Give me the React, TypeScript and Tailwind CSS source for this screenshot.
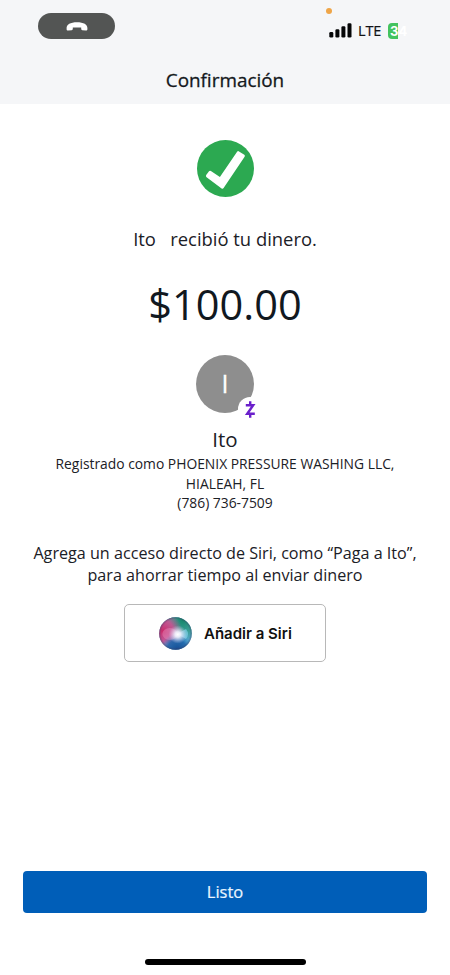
import type { ReactNode } from 'react'

const payment = {
  recipient: 'Ito',
  amount: '$100.00',
  registeredAs: ['Registrado como PHOENIX PRESSURE WASHING LLC,', 'HIALEAH, FL', '(786) 736-7509'],
}

function SignalBars() {
  return (
    <svg className="mb-px h-[15px] w-[23px]" viewBox="0 0 23 15" fill="#050607">
      <rect x="0.3" y="9" width="4" height="5.5" rx="1.3" />
      <rect x="6.4" y="6.3" width="4" height="8.2" rx="1.3" />
      <rect x="12.4" y="3.3" width="4" height="11.2" rx="1.3" />
      <rect x="18.5" y="0.3" width="4" height="14.2" rx="1.3" />
    </svg>
  )
}

function StatusBar() {
  return (
    <div className="relative flex h-[52px] justify-between pl-[38px] pr-[38px]">
      <div className="mt-[13px] flex h-[26px] w-[77px] items-center justify-center rounded-full bg-[#535554]">
        <svg className="h-[9px] w-[22px]" viewBox="0 0 22 9" fill="white">
          <path d="M.6 6.2C.4 2.4 4.4.2 11 .2S21.6 2.4 21.4 6.2V7.2C21.3 8.2 20.8 8.5 20 8.5L16.4 8.2C15.6 8.1 15.2 7.6 15.2 6.8V5.4H6.8V6.8C6.8 7.6 6.4 8.1 5.6 8.2L2 8.5C1.2 8.5.7 8.2.6 7.2Z" />
        </svg>
      </div>
      <span className="absolute left-[326px] top-[8px] h-[6px] w-[6px] rounded-full bg-[#efa548]" />
      <div className="mt-[22px] flex h-[18px] w-[83px] items-center">
        <SignalBars />
        <span className="ml-[6px] w-[24px] whitespace-nowrap font-['Open_Sans',sans-serif] text-[14.5px] leading-[18px] tracking-[-0.1px] text-[#111315] [-webkit-text-stroke:0.2px_#111315]">
          LTE
        </span>
        <div className="mb-px ml-[6px] flex h-[16px] w-[24px] items-center rounded-l-[4px] bg-[linear-gradient(90deg,#43c35e_10.5px,transparent_10.5px)] pl-[2px] font-['Inter',sans-serif] text-[13px] font-bold leading-[16px] text-white">
          34
        </div>
      </div>
    </div>
  )
}

function SuccessBadge() {
  return (
    <svg className="mt-[36px] h-[57px] w-[57px]" viewBox="0 0 57 57">
      <circle cx="28.5" cy="28.5" r="28.5" fill="#2ca951" />
      <path
        d="M9.2 35 12 31.3Q12.8 30.3 13.9 31L22.9 37 40.1 11.8Q40.9 10.6 42 11.4L47.3 14.7Q48.4 15.5 47.6 16.7L26.6 48Q25.8 49.3 24.6 48.5L9.6 37.3Q8.4 36.2 9.2 35Z"
        fill="white"
      />
    </svg>
  )
}

function Avatar() {
  return (
    <svg className="mt-[25px] ml-[4px] h-[65px] w-[62px]" viewBox="0 0 62 65">
      <circle cx="29" cy="29" r="29" fill="#8e8e8e" />
      <text
        x="29"
        y="38"
        textAnchor="middle"
        className="font-['Open_Sans',sans-serif] text-[25px]"
        fill="white"
        stroke="white"
        strokeWidth="0.3"
      >
        I
      </text>
      <circle cx="54" cy="54" r="12" fill="white" />
      <path d="M49.8 50.2H57.2L51.2 58.8H58.8" fill="none" stroke="#6a1fcb" strokeWidth="2.4" />
      <path d="M54.2 46.2V50M54.2 59V62.8" fill="none" stroke="#6a1fcb" strokeWidth="2.4" />
    </svg>
  )
}

function SiriOrb() {
  return (
    <svg className="h-[33px] w-[33px]" viewBox="0 0 33 33">
      <defs>
        <radialGradient id="orb-pink" cx="0.1" cy="0.42" r="0.6">
          <stop offset="0" stopColor="#c92a6a" />
          <stop offset="0.55" stopColor="#d54c90" stopOpacity="0.85" />
          <stop offset="1" stopColor="#d54c90" stopOpacity="0" />
        </radialGradient>
        <radialGradient id="orb-green" cx="0.72" cy="0.08" r="0.65">
          <stop offset="0" stopColor="#15866a" />
          <stop offset="0.6" stopColor="#339d8c" stopOpacity="0.85" />
          <stop offset="1" stopColor="#339d8c" stopOpacity="0" />
        </radialGradient>
        <radialGradient id="orb-blue" cx="0.55" cy="1" r="0.5">
          <stop offset="0" stopColor="#164a91" />
          <stop offset="0.6" stopColor="#1d63aa" stopOpacity="0.85" />
          <stop offset="1" stopColor="#3a8fce" stopOpacity="0" />
        </radialGradient>
        <radialGradient id="orb-glow" cx="0.57" cy="0.53" r="0.28">
          <stop offset="0" stopColor="#fff" />
          <stop offset="0.3" stopColor="#f4f4ff" stopOpacity="0.9" />
          <stop offset="1" stopColor="#d9cdf2" stopOpacity="0" />
        </radialGradient>
        <radialGradient id="orb-edge">
          <stop offset="0.86" stopColor="#40395e" stopOpacity="0" />
          <stop offset="1" stopColor="#40395e" stopOpacity="0.45" />
        </radialGradient>
      </defs>
      <circle cx="16.5" cy="16.5" r="16.3" fill="#56a8ce" />
      <circle cx="16.5" cy="16.5" r="16.3" fill="url(#orb-green)" />
      <circle cx="16.5" cy="16.5" r="16.3" fill="url(#orb-pink)" />
      <circle cx="16.5" cy="16.5" r="16.3" fill="url(#orb-blue)" />
      <ellipse cx="10.8" cy="17" rx="7.5" ry="6" fill="#f0a5cf" opacity="0.35" />
      <path d="M18 17 27 12Q31 17 27 22Z" fill="#8bd9f5" opacity="0.6" />
      <circle cx="16.5" cy="16.5" r="16.3" fill="url(#orb-glow)" />
      <circle cx="16.5" cy="16.5" r="16.3" fill="url(#orb-edge)" />
    </svg>
  )
}

function SiriButton({ children }: { children: ReactNode }) {
  return (
    <button className="mt-[18px] flex h-[58px] w-[202px] items-center rounded-[5px] border-[1.5px] border-[#b8b8b8] bg-white pl-[34px] pt-[2px]">
      <SiriOrb />
      <span className="ml-[12px] whitespace-nowrap font-['Inter',sans-serif] text-[15px] font-semibold leading-5 text-[#111111]">
        {children}
      </span>
    </button>
  )
}

export default function App() {
  return (
    <div className="flex h-[975px] w-[450px] flex-col overflow-hidden bg-white font-['Open_Sans',sans-serif] text-[#1b2026]">
      <header className="h-[104px] bg-[#f5f6f8]">
        <StatusBar />
        <h1 className="mt-[16px] text-center text-[18.9px] leading-6 text-[#14181c] [-webkit-text-stroke:0.3px_#14181c]">
          Confirmación
        </h1>
      </header>

      <main className="flex flex-1 flex-col items-center whitespace-nowrap text-center">
        <SuccessBadge />
        <p className="mt-[30px] whitespace-pre text-[18.4px] leading-6">
          {payment.recipient}{'   '}recibió tu dinero.
        </p>
        <p className="mt-[27px] text-[41.5px] leading-[52px] text-[#11181f]">{payment.amount}</p>
        <Avatar />
        <h2 className="mt-[7px] text-[20.5px] leading-6">{payment.recipient}</h2>
        <div className="mt-[3px] text-[13.85px] leading-[19.5px]">
          {payment.registeredAs.map((line) => (
            <p key={line}>{line}</p>
          ))}
        </div>
        <p className="mt-[29px] text-[16.15px] leading-[22px]">
          Agrega un acceso directo de Siri, como “Paga a Ito”,
          <br />
          para ahorrar tiempo al enviar dinero
        </p>
        <SiriButton>Añadir a Siri</SiriButton>
      </main>

      <footer className="flex h-[104px] flex-col items-center px-[23px]">
        <button className="h-[42px] w-full rounded-[4px] bg-[#005eb8] text-[16.5px] leading-[22px] text-[#eaf6ff] [-webkit-text-stroke:0.2px_#eaf6ff]">
          Listo
        </button>
        <div className="mt-[46px] h-[6px] w-[161px] rounded-full bg-black" />
      </footer>
    </div>
  )
}
